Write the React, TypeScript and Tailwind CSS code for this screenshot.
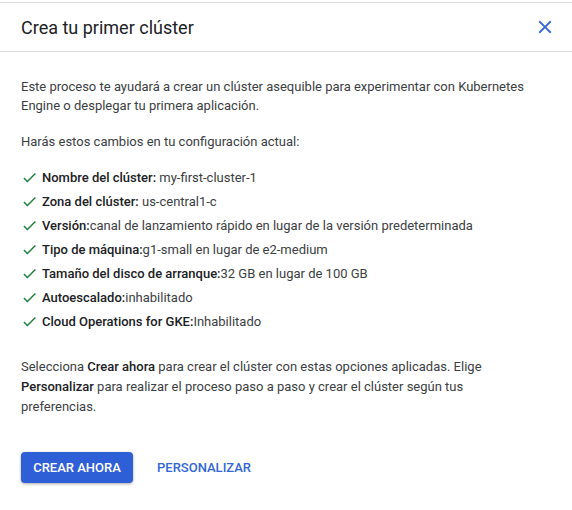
import React from 'react';

const changes: { label: string; value: string; space?: boolean }[] = [
  { label: 'Nombre del clúster:', value: 'my-first-cluster-1', space: true },
  { label: 'Zona del clúster:', value: 'us-central1-c', space: true },
  { label: 'Versión:', value: 'canal de lanzamiento rápido en lugar de la versión predeterminada' },
  { label: 'Tipo de máquina:', value: 'g1-small en lugar de e2-medium' },
  { label: 'Tamaño del disco de arranque:', value: '32 GB en lugar de 100 GB' },
  { label: 'Autoescalado:', value: 'inhabilitado' },
  { label: 'Cloud Operations for GKE:', value: 'Inhabilitado' },
];

function CheckIcon() {
  return (
    <svg viewBox="0 0 24 24" className="h-[17px] w-[17px] shrink-0" fill="#188038">
      <path d="M9 16.17L4.83 12l-1.42 1.41L9 19 21 7l-1.41-1.41z" />
    </svg>
  );
}

export default function App() {
  return (
    <div
      className="min-h-[510px] w-[572px] bg-white pt-[2px] text-[#3c4043]"
      style={{ fontFamily: 'Roboto, "Liberation Sans", sans-serif' }}
    >
      {/* Header */}
      <div className="flex h-[50px] items-center justify-between border-y border-[#dadce0] pl-[21px] pr-[15px]">
        <h2 className="text-[18px] text-[#202124]">Crea tu primer clúster</h2>
        <button type="button" className="flex h-6 w-6 items-center justify-center">
          <svg viewBox="0 0 24 24" className="h-[22px] w-[22px]" fill="#3367d6">
            <path d="M19 6.41L17.59 5 12 10.59 6.41 5 5 6.41 10.59 12 5 17.59 6.41 19 12 13.41 17.59 19 19 17.59 13.41 12z" />
          </svg>
        </button>
      </div>

      {/* Body */}
      <div className="pl-[21px] pr-[44px] pt-[25px] text-[13px] leading-[19px]">
        <p>
          Este proceso te ayudará a crear un clúster asequible para experimentar con Kubernetes
          Engine o desplegar tu primera aplicación.
        </p>
        <p className="mt-[17px]">Harás estos cambios en tu configuración actual:</p>

        <ul className="mt-[17px] flex flex-col gap-[5px]">
          {changes.map((c) => (
            <li key={c.label} className="flex items-center gap-[4px]">
              <CheckIcon />
              <span>
                <span className="font-medium text-[#202124]">{c.label}</span>
                {c.space ? ' ' : ''}
                {c.value}
              </span>
            </li>
          ))}
        </ul>

        <p className="mt-[26px] leading-5">
          Selecciona <span className="font-medium text-[#202124]">Crear ahora</span> para crear el
          clúster con estas opciones aplicadas. Elige{' '}
          <span className="font-medium text-[#202124]">Personalizar</span> para realizar el proceso
          paso a paso y crear el clúster según tus preferencias.
        </p>

        <div className="mt-[35px] flex items-center gap-[24px]">
          <button
            type="button"
            className="h-[31px] w-[112px] rounded-[4px] bg-[#2f5fd6] text-[13px] font-medium text-white shadow-[0_1px_3px_rgba(0,0,0,0.35)]"
          >
            CREAR AHORA
          </button>
          <button type="button" className="text-[13px] font-medium text-[#3367d6]">
            PERSONALIZAR
          </button>
        </div>
      </div>
    </div>
  );
}
